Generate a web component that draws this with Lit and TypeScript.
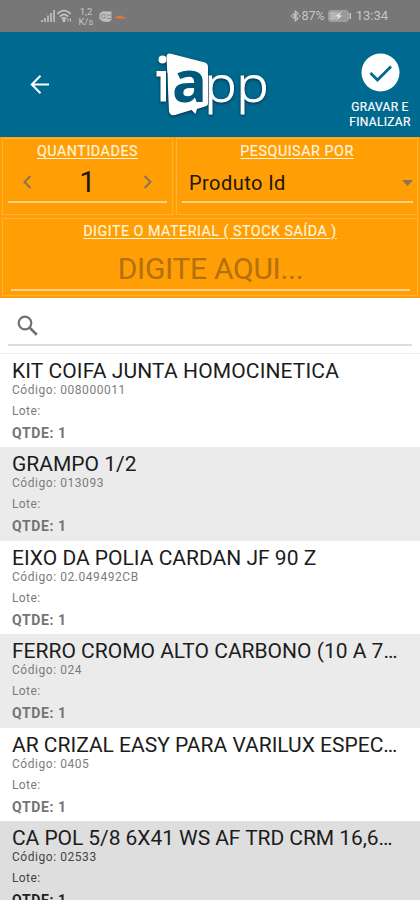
import { LitElement, html, css } from "lit";
import { customElement, property } from "lit/decorators.js";

interface Item {
  name: string;
  code: string;
  qty: number;
}

const ITEMS: Item[] = [
  { name: "KIT COIFA JUNTA HOMOCINETICA", code: "008000011", qty: 1 },
  { name: "GRAMPO 1/2", code: "013093", qty: 1 },
  { name: "EIXO DA POLIA CARDAN JF 90 Z", code: "02.049492CB", qty: 1 },
  { name: "FERRO CROMO ALTO CARBONO (10 A 7…", code: "024", qty: 1 },
  { name: "AR CRIZAL EASY PARA VARILUX ESPEC…", code: "0405", qty: 1 },
  { name: "CA POL 5/8 6X41 WS AF TRD CRM 16,6…", code: "02533", qty: 1 },
];

@customElement("status-bar")
class StatusBar extends LitElement {
  static styles = css`
    :host { display: flex; box-sizing: border-box; height: 32px; background: #777; color: #c6c6c6; padding: 0 32px 0 41px; align-items: center; }
    svg { display: block; }
    .left, .right { display: flex; align-items: center; }
    .right { margin-left: auto; font-size: 12.5px; line-height: 14px; }
    .clock { font-size: 13px; }
    .rate { font-size: 9.500px; line-height: 10px; text-align: center; width: 16px; margin: 2px 5px 0 5px; }
    .battery { margin: 0 4px 0 3px; }
  `;
  render() {
    return html`
      <div class="left">
        <svg width="15" height="16" viewBox="0 0 15 16" fill="#b4b4b4">
          <path d="M0 12h2v2H0zM3 10h2v4H3zM6 7.500h2v6.500H6zM9 5h2v9H9zM12 2h2v12h-2z" />
        </svg>
        <svg width="17" height="16" viewBox="0 0 17 16" fill="none" stroke="#c6c6c6" stroke-width="1.700">
          <path d="M1.500 6Q8 -1 14.500 6M3.800 8.600Q8 4 12.200 8.600M6 11Q8 8.800 10 11" />
          <circle cx="8" cy="12.600" r="0.700" />
          <path d="M12 10.500v3M14.500 10.500v3" stroke-width="1" />
        </svg>
        <div class="rate">1,2<br />K/s</div>
        <svg width="14" height="13" viewBox="0 0 14 13">
          <path d="M4 1.200 12.500 1.500V10L9.500 12 4 11.500 .5 9V3.500z" fill="#bdbdbd" />
          <circle cx="4.500" cy="6.300" r="2" fill="none" stroke="#8a8a8a" />
          <path d="M8 4l2 2 2.500-2M8 8.500h4" fill="none" stroke="#8a8a8a" />
        </svg>
        <svg width="16" height="13" viewBox="0 0 16 13">
          <path d="M2 7.500 6 5.800 7 4.800 9 6.500 14 7.500 12 8.500H7L2 8z" fill="#e87830" />
        </svg>
      </div>
      <div class="right">
        <svg width="11" height="14" viewBox="0 0 11 14" fill="none" stroke="#c6c6c6" stroke-width="1.200">
          <path d="M2.500 4.500 8 9.500 5.300 12V2L8 4.500 2.500 9.500" />
          <path d="M1.500 6v2M9.700 6v2" />
        </svg>
        <span>87%</span>
        <svg class="battery" width="24" height="12" viewBox="0 0 24 12">
          <rect x=".7" y=".7" width="19.600" height="10.600" rx="2" fill="#999" stroke="#a8a8a8" />
          <path d="M2 2h9L7 10H2z" fill="#b5b5b5" />
          <path d="M13.500 1.500 7 6.500h3L8 10.500l6.500-5h-3z" fill="#e2e2e2" />
          <path d="M21.500 3h1.500v6h-1.500z" fill="#c6c6c6" />
        </svg>
        <span class="clock">13:34</span>
      </div>
    `;
  }
}

@customElement("app-header")
class AppHeader extends LitElement {
  static styles = css`
    :host { display: grid; grid-template-columns: 145px 130px 1fr; height: 104.5px; background: #00698f; color: #fff; }
    svg { display: block; }
    .back { padding: 42px 0 0 29px; }
    .logo { padding-top: 13px; }
    .shade { filter: drop-shadow(0 1px 1.500px rgba(0, 25, 45, 0.75)); }
    .thick { font: 700 57px "Open Sans", sans-serif; }
    .thin { font: 300 49px "Open Sans", sans-serif; }
    .save { display: flex; flex-direction: column; align-items: center; width: 74px; margin: 21px 3px 0 auto; }
    .label { font-size: 12px; line-height: 15px; text-align: center; margin-top: 8px; letter-spacing: 0.3px; white-space: nowrap; -webkit-text-stroke: 0.2px #fff; }
  `;
  render() {
    return html`
      <div class="back">
        <svg width="22" height="21" viewBox="0 0 22 21" fill="none" stroke="#fff" stroke-width="2">
          <path d="M20 10.500H3M11.500 1.800 2.800 10.500 11.500 19.200" />
        </svg>
      </div>
      <div class="logo">
        <svg width="130" height="80" viewBox="0 0 130 80">
          <g class="shade">
            <circle cx="17.500" cy="14.500" r="4" fill="#fff" />
            <path d="M11.500 26H21V56.500H15.500V31.500H11.500z" fill="#fff" />
            <path d="M25 8.500 60 17.500Q63 18.500 63 22V58Q63 61 60 61.500L52 64 50.500 69 46.500 65 30 70Q24.500 71 24 66L21.500 11.500Q22 8 25 8.500z" fill="#fff" />
            <text class="thin" x="59.500" y="56.500" fill="#fff" stroke="#fff" stroke-width="1" textLength="64" lengthAdjust="spacingAndGlyphs">pp</text>
          </g>
          <path d="M22 28V57" stroke="#00506d" stroke-width="1" />
          <text class="thick" x="27" y="56.500" fill="#00587a" textLength="35" lengthAdjust="spacingAndGlyphs">a</text>
        </svg>
      </div>
      <div class="save">
        <svg width="39" height="39" viewBox="0 0 39 39">
          <circle cx="19.500" cy="19.500" r="19" fill="#fff" />
          <path d="M9.500 20 16.500 27 30 13.500" fill="none" stroke="#00698f" stroke-width="2.800" />
        </svg>
        <div class="label">GRAVAR E<br />FINALIZAR</div>
      </div>
    `;
  }
}

@customElement("search-form")
class SearchForm extends LitElement {
  static styles = css`
    :host { display: grid; box-sizing: border-box; grid-template-columns: 171px 1fr; grid-template-rows: 77px 78px; column-gap: 3px; row-gap: 3px; height: 161px; padding: 1px 2px 1px 2px; background: #ff9e05; }
    .cell { box-sizing: border-box; border: 1px solid #ffb13a; padding-top: 4px; }
    .wide { grid-column: 1 / 3; padding-top: 4px; }
    .title { color: #fff3dc; font-size: 14.300px; line-height: 17px; letter-spacing: 0.54px; text-align: center; text-decoration: underline; text-underline-offset: 1.500px; white-space: pre; -webkit-text-stroke: 0.2px #fff3dc; }
    .wide .title { letter-spacing: 0.5px; }
    .row { display: flex; align-items: center; justify-content: space-between; height: 43px; margin: 0 5px; border-bottom: 2px solid #ffcf85; box-sizing: border-box; }
    .stepper { padding: 3px 14px 0; }
    .select { padding: 5px 0 0 7px; margin-right: 4px; color: #20180a; font-size: 20px; letter-spacing: 0.45px; }
    .number { font-size: 29px; color: #20180a; }
    .entry { height: 40px; margin: 0 7px 0 8px; padding-top: 10px; border-bottom: 2px solid #ffcf85; color: #b3700c; font-size: 30px; line-height: 38px; letter-spacing: -0.3px; text-align: center; }
    .entry { height: 39px; }
    svg { display: block; }
  `;
  render() {
    return html`
      <div class="cell">
        <div class="title">QUANTIDADES</div>
        <div class="row stepper">
          <svg width="10" height="14" viewBox="0 0 10 14" fill="none" stroke="#8b7355" stroke-width="2"><path d="M8.500 1 2.500 7l6 6" /></svg>
          <span class="number">1</span>
          <svg width="10" height="14" viewBox="0 0 10 14" fill="none" stroke="#8b7355" stroke-width="2"><path d="M1.500 1l6 6-6 6" /></svg>
        </div>
      </div>
      <div class="cell">
        <div class="title">PESQUISAR POR</div>
        <div class="row select">
          <span>Produto Id</span>
          <svg width="11" height="6" viewBox="0 0 11 6"><path d="M0 0h11L5.500 6z" fill="#8b7355" /></svg>
        </div>
      </div>
      <div class="cell wide">
        <div class="title">DIGITE O MATERIAL ( STOCK SAÍDA )</div>
        <div class="entry">DIGITE AQUI...</div>
      </div>
    `;
  }
}

@customElement("item-row")
class ItemRow extends LitElement {
  @property({ attribute: false }) item!: Item;
  static styles = css`
    :host { display: block; box-sizing: border-box; height: 93.5px; padding: 5px 12px 0; color: #7c7c7c; }
    .name { color: #1c1c1c; font-size: 21px; line-height: 25px; white-space: nowrap; }
    .code { font-size: 12px; line-height: 14px; letter-spacing: 0.55px; margin-top: -1px; }
    .lot { font-size: 12px; line-height: 14px; letter-spacing: 0.4px; margin-top: 7px; }
    .qty { font-size: 14px; line-height: 16px; font-weight: 700; margin-top: 7px; letter-spacing: 0.6px; color: #747474; }
    :host(.first) .name { letter-spacing: 0.13px; }
    :host(.pressed) .name { letter-spacing: -0.06px; }
    :host(.pressed) .code, :host(.pressed) .lot { color: #444; }
    :host(.pressed) .qty { color: #222; }
  `;
  render() {
    return html`
      <div class="name">${this.item.name}</div>
      <div class="code">Código: ${this.item.code}</div>
      <div class="lot">Lote:</div>
      <div class="qty">QTDE: ${this.item.qty}</div>
    `;
  }
}

@customElement("app-root")
class AppRoot extends LitElement {
  static styles = css`
    :host { display: block; width: 420px; height: 900px; overflow: hidden; background: #fff; font-family: Roboto, "Liberation Sans", sans-serif; }
    .search { box-sizing: border-box; height: 56px; padding: 17px 8px 0; border-bottom: 1px solid #f0f0f0; }
    .field { box-sizing: border-box; height: 31px; padding-left: 9px; border-bottom: 2px solid #ddd; }
    item-row:nth-child(even) { background: #ebebeb; }
    item-row.pressed { background: #dedede; }
    svg { display: block; }
  `;
  render() {
    return html`
      <status-bar></status-bar>
      <app-header></app-header>
      <search-form></search-form>
      <div class="search">
        <div class="field">
          <svg width="22" height="22" viewBox="0 0 22 22" fill="none" stroke="#717171">
            <circle cx="8" cy="8" r="6.300" stroke-width="2.200" />
            <path d="M12.600 12.600 19.800 19.800" stroke-width="2.700" />
          </svg>
        </div>
      </div>
      <div>
        ${ITEMS.map((item, i) => html`<item-row class=${i === 5 ? "pressed" : i === 0 ? "first" : ""} .item=${item}></item-row>`)}
      </div>
    `;
  }
}
